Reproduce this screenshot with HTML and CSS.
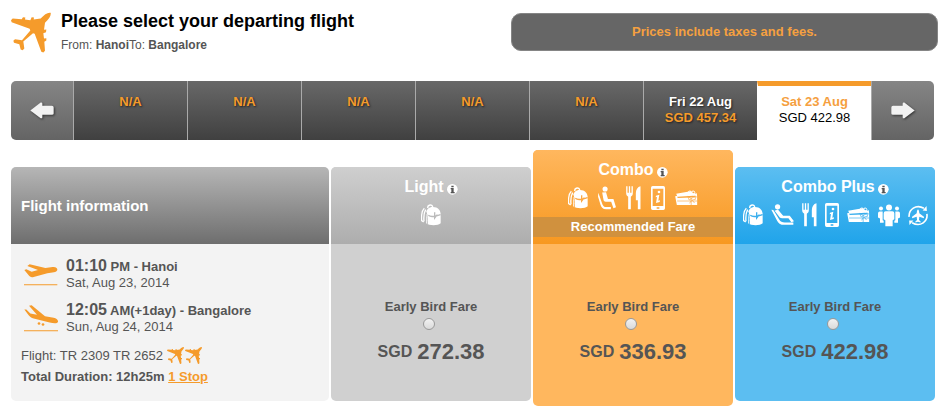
FILE: index.html
```html
<!DOCTYPE html>
<html lang="en">
<head>
    <meta charset="UTF-8">
    <meta name="viewport" content="width=device-width, initial-scale=1.0">
    <title>Select your departing flight</title>
    <link rel="stylesheet" href="styles.css">
</head>
<body>
    <!-- shared icons -->
    <svg class="sprite" aria-hidden="true">
        <symbol id="plane" viewBox="0 0 120 120">
            <path d="M119 1C110-1 100 6 89 18L68 21 69 15 62 14 58 23 42 21 43 15 36 14 32 20 5 18 0 23 2 29 56 49 58 54 33 83 12 80 7 85 9 91 25 95 29 111 35 113 40 108 37 87 66 62 71 64 91 118 97 120 102 115 100 88 106 84 106 77 99 78 97 62 105 59 106 51 99 52 102 31C114 20 121 10 119 1Z"/>
        </symbol>
        <symbol id="takeoff" viewBox="0 0 102 66">
            <path d="M1 18L7 16 23 23 42 18 10 6 17 1 64 12 86 9C96 8 101 13 100 18 98 25 84 26 70 28L29 39C21 41 17 38 14 34Z"/>
            <path d="M0 61H100V64H0Z"/>
        </symbol>
        <symbol id="landing" viewBox="0 0 102 80">
            <path d="M1 13L7 13 19 25 39 29 15 2 23 0 63 33 89 38C98 40 103 45 102 50 100 56 89 55 77 52L29 40C22 38 18 34 14 30Z"/>
            <circle cx="45" cy="55" r="4"/><circle cx="57" cy="58" r="4"/>
            <path d="M0 75H102V78H0Z"/>
        </symbol>
        <symbol id="bag" viewBox="0 0 60 66">
            <path d="M20 12C20 1 34 0 35 9M10 13C1 22 1 38 2 50L8 54M14 17C8 28 8 42 9 52" fill="none" stroke="currentColor" stroke-width="4"/>
            <path d="M15 58V30C15 17 23 9 36 9C51 9 59 19 59 32V58C52 66 24 66 15 58Z"/>
            <path d="M22 34C31 41 40 37 59 32M41 25V42L49 32" fill="none" stroke="var(--cut)" stroke-width="4"/>
            <path d="M15 24C20 35 18 46 19 60" fill="none" stroke="var(--cut)" stroke-width="3"/>
        </symbol>
        <symbol id="seat" viewBox="0 0 56 72">
            <circle cx="22" cy="8" r="8"/>
            <path d="M13 19L25 18 31 39H48L56 65 48 68 41 48H24C19 48 18 45 17 41Z"/>
            <path d="M1 20L14 56C17 63 21 64 27 64H40V71H25C15 71 11 66 8 58L0 31Z"/>
        </symbol>
        <symbol id="recline" viewBox="0 0 70 66">
            <circle cx="20" cy="8" r="8"/>
            <path d="M11 20L21 16 37 35H57L70 52 62 55 53 43H34C28 43 25 39 21 33Z"/>
            <path d="M1 17L7 18 25 47C29 54 34 56 42 56H68V63H40C29 63 24 59 19 51Z"/>
        </symbol>
        <symbol id="meal" viewBox="0 0 44 72">
            <path d="M0 1H4V20H8V1H12V20H16V1H20V22C20 28 17 30 14 32V70H6V32C3 30 0 28 0 22Z"/>
            <path d="M43 1V70H35V43H29V22C29 11 34 3 43 1Z"/>
        </symbol>
        <symbol id="phone" viewBox="0 0 42 72">
            <path fill-rule="evenodd" d="M5 0H37Q42 0 42 5V67Q42 72 37 72H5Q0 72 0 67V5Q0 0 5 0ZM5 8V60H37V8ZM17 64V68H25V64Z"/>
            <circle cx="24" cy="18" r="4"/>
            <path d="M15 29L25 26 22 44 27 43 26 48 15 51 18 33 14 34Z"/>
        </symbol>
        <symbol id="voucher" viewBox="0 0 68 48">
            <path d="M3 11L46 4 58 11 65 10 66 20 54 17 7 20Z"/>
            <path d="M0 19L7 17V24L66 22V45H5Z"/>
            <path d="M6 33H66M48 23V46M47 25L38 19 42 30 51 25 59 17 61 28 51 30 58 39M49 31L43 40" fill="none" stroke="var(--cut)" stroke-width="2"/>
            <circle cx="44" cy="8" r="5" fill="none" stroke="currentColor" stroke-width="3"/>
            <circle cx="54" cy="8" r="5" fill="none" stroke="currentColor" stroke-width="3"/>
        </symbol>
        <symbol id="people" viewBox="0 0 66 68">
            <circle cx="33" cy="10" r="9"/><circle cx="9" cy="13" r="6"/><circle cx="57" cy="13" r="6"/>
            <path d="M23 21H43Q49 21 49 28V45L44 48V66H22V48L17 45V28Q17 21 23 21Z"/>
            <path d="M5 22H14V48L17 50V56H6V43L0 40V28Q0 22 5 22ZM61 22H52V48L49 50V56H60V43L66 40V28Q66 22 61 22Z"/>
        </symbol>
        <symbol id="change" viewBox="0 0 60 64">
            <path d="M3 36C1 14 24-4 48 10M57 27C61 49 38 69 12 54" fill="none" stroke="currentColor" stroke-width="5"/>
            <path d="M44 17L57 18 56 3ZM16 47L3 47 4 61Z"/>
            <path d="M30 13Q34 16 34 25L48 36V40L34 36 33 46 38 50V53L30 51 22 53V50L27 46 26 36 12 40V36L26 25Q26 16 30 13Z"/>
        </symbol>
        <symbol id="info" viewBox="0 0 33 33">
            <circle cx="16" cy="16" r="16"/>
            <path d="M13 5H20V10H13ZM11 12H20V24H23V28H11V24H13V16H11Z" fill="#555"/>
        </symbol>
        <symbol id="arrow" viewBox="0 0 72 50">
            <path d="M1 25L32 1Q37 0 37 5V11H66Q71 11 71 16V34Q71 38 66 38H37V45Q37 50 32 48Z"/>
        </symbol>
    </svg>

    <header class="page-header">
        <div class="heading">
            <svg class="heading-icon"><use href="#plane"/></svg>
            <div>
                <h1>Please select your departing flight</h1>
                <p>From: <b>Hanoi</b>To: <b>Bangalore</b></p>
            </div>
        </div>
        <div class="notice">Prices include taxes and fees.</div>
    </header>

    <main>
        <nav class="dates" aria-label="Departure date">
            <button class="date-arrow" aria-label="Previous dates"><svg><use href="#arrow"/></svg></button>
            <button class="date"><span class="price">N/A</span></button>
            <button class="date"><span class="price">N/A</span></button>
            <button class="date"><span class="price">N/A</span></button>
            <button class="date"><span class="price">N/A</span></button>
            <button class="date"><span class="price">N/A</span></button>
            <button class="date"><span class="day">Fri 22 Aug</span><span class="price">SGD 457.34</span></button>
            <button class="date selected"><span class="day">Sat 23 Aug</span><span class="price">SGD 422.98</span></button>
            <button class="date-arrow next" aria-label="Next dates"><svg><use href="#arrow"/></svg></button>
        </nav>

        <div class="fares">
            <section class="card flight">
                <h2 class="card-head">Flight information</h2>
                <div class="flight-body">
                    <div class="leg">
                        <svg class="takeoff"><use href="#takeoff"/></svg>
                        <div>
                            <p class="time"><strong>01:10</strong> PM - Hanoi</p>
                            <p>Sat, Aug 23, 2014</p>
                        </div>
                    </div>
                    <div class="leg">
                        <svg class="landing"><use href="#landing"/></svg>
                        <div>
                            <p class="time"><strong>12:05</strong> AM(+1day) - Bangalore</p>
                            <p>Sun, Aug 24, 2014</p>
                        </div>
                    </div>
                    <p class="numbers">Flight: TR 2309 TR 2652 <svg><use href="#plane"/></svg><svg><use href="#plane"/></svg></p>
                    <p class="duration">Total Duration: 12h25m <a href="#">1 Stop</a></p>
                </div>
            </section>

            <section class="card light">
                <div class="card-head">
                    <h2>Light <svg class="info"><use href="#info"/></svg></h2>
                    <div class="perks">
                        <svg class="bag"><use href="#bag"/></svg>
                    </div>
                </div>
                <div class="card-body">
                    <label for="fare-light">Early Bird Fare</label>
                    <input type="radio" name="fare" id="fare-light">
                    <p class="amount"><span>SGD</span> <strong>272.38</strong></p>
                </div>
            </section>

            <section class="card combo">
                <div class="card-head">
                    <h2>Combo <svg class="info"><use href="#info"/></svg></h2>
                    <div class="perks">
                        <svg class="bag"><use href="#bag"/></svg>
                        <svg class="seat"><use href="#seat"/></svg>
                        <svg class="meal"><use href="#meal"/></svg>
                        <svg class="phone"><use href="#phone"/></svg>
                        <svg class="voucher"><use href="#voucher"/></svg>
                    </div>
                    <p class="recommended">Recommended Fare</p>
                </div>
                <div class="card-body">
                    <label for="fare-combo">Early Bird Fare</label>
                    <input type="radio" name="fare" id="fare-combo">
                    <p class="amount"><span>SGD</span> <strong>336.93</strong></p>
                </div>
            </section>

            <section class="card plus">
                <div class="card-head">
                    <h2>Combo Plus <svg class="info"><use href="#info"/></svg></h2>
                    <div class="perks">
                        <svg class="bag"><use href="#bag"/></svg>
                        <svg class="recline"><use href="#recline"/></svg>
                        <svg class="meal"><use href="#meal"/></svg>
                        <svg class="phone"><use href="#phone"/></svg>
                        <svg class="voucher"><use href="#voucher"/></svg>
                        <svg class="people"><use href="#people"/></svg>
                        <svg class="change"><use href="#change"/></svg>
                    </div>
                </div>
                <div class="card-body">
                    <label for="fare-plus">Early Bird Fare</label>
                    <input type="radio" name="fare" id="fare-plus">
                    <p class="amount"><span>SGD</span> <strong>422.98</strong></p>
                </div>
            </section>
        </div>
    </main>
</body>
</html>
```
FILE: styles.css
```css
* {
    box-sizing: border-box;
}
body {
    margin: 0;
    padding: 10px 4px 10px 11px;
    font-family: "Liberation Sans", Arial, sans-serif;
    font-size: 13px;
    line-height: 16px;
    color: #555;
    background-color: #fff;
}
h1, h2, p {
    margin: 0;
}
svg {
    fill: currentColor;
}
.sprite {
    display: none;
}

/* header */
.page-header {
    display: grid;
    grid-template-columns: 500fr 427fr;
    align-items: start;
}
.heading {
    display: flex;
    gap: 10px;
}
.heading-icon {
    width: 40px;
    height: 41px;
    margin-top: 2px;
    color: #f59b2b;
}
.heading h1 {
    font-size: 18px;
    line-height: 22px;
    color: #000;
}
.heading p {
    margin-top: 5px;
    font-size: 12px;
}
.notice {
    margin-top: 3px;
    padding: 10px;
    border: 1px solid #858585;
    border-radius: 10px;
    background-color: #666;
    color: #f5a040;
    font-weight: bold;
    text-align: center;
}

/* date bar */
.dates {
    display: grid;
    grid-template-columns: 62px repeat(7, 1fr) 63px;
    height: 59px;
    margin: 28px 4px 0 0;
    border-radius: 5px;
    overflow: hidden;
}
.dates button {
    display: flex;
    flex-direction: column;
    align-items: center;
    margin: 0;
    padding: 13px 0 0;
    border: none;
    border-left: 1px solid #aaa;
    font: bold 13px/16px "Liberation Sans", Arial, sans-serif;
    color: #fff;
    background: linear-gradient(#686868, #404040);
    text-shadow: 1px 1px 2px #222;
    cursor: pointer;
}
.dates .price {
    color: #f59b2b;
}
.dates .date.selected {
    padding-top: 8px;
    border-left-color: #fff;
    border-top: 5px solid #f59b2b;
    background: #fff;
    text-shadow: none;
}
.selected .day {
    color: #f5a040;
}
.dates .selected .price {
    color: #000;
    font-weight: normal;
}
.dates .date-arrow {
    justify-content: center;
    padding: 0;
    color: #f2f2f2;
    background: linear-gradient(#858585, #646464);
}
.dates .date-arrow:first-child {
    border-left: none;
}
.date-arrow svg {
    width: 24px;
    height: 17px;
    filter: drop-shadow(1px 1px 1px #333);
}
.date-arrow.next use {
    transform: scaleX(-1);
    transform-origin: center;
}

/* fare cards */
.fares {
    display: grid;
    grid-template-columns: 318fr 200fr 200fr 200fr;
    gap: 2px;
    align-items: start;
    margin: 10px 3px 0 0;
}
.card {
    margin-top: 17px;
    border-radius: 5px;
    overflow: hidden;
}
.card-head {
    min-height: 77px;
    padding-top: 10px;
    color: #fff;
    text-align: center;
}
.card-head h2 {
    display: flex;
    justify-content: center;
    align-items: center;
    gap: 3px;
    font-size: 16px;
    line-height: 20px;
}
.info {
    width: 11px;
    height: 11px;
    margin-top: 4px;
}
.perks {
    display: flex;
    justify-content: center;
    align-items: center;
    gap: 8px;
    height: 24px;
    margin-top: 6px;
}
.bag { width: 20px; height: 22px; }
.seat { width: 18px; height: 24px; }
.recline { width: 23px; height: 22px; }
.meal { width: 15px; height: 24px; }
.phone { width: 14px; height: 24px; }
.voucher { width: 23px; height: 16px; }
.people { width: 22px; height: 23px; }
.change { width: 20px; height: 21px; }

.card-body {
    display: flex;
    flex-direction: column;
    align-items: center;
    padding: 55px 0 37px;
}
.card-body label {
    font-weight: bold;
}
.card-body input {
    appearance: none;
    width: 12px;
    height: 12px;
    margin: 3px 4px 10px 0;
    border: 1px solid #999;
    border-radius: 50%;
    background: linear-gradient(#f2f2f2, #dadada);
}
.card-body input:checked {
    background: radial-gradient(#444 35%, #e8e8e8 45%);
}
.amount {
    display: flex;
    align-items: center;
    gap: 5px;
    font-size: 16px;
    font-weight: bold;
    line-height: 24px;
}
.amount strong {
    font-size: 22px;
}

.light { --cut: #bbb; background-color: #d0d0d0; }
.light .card-head { background: linear-gradient(#cfcfcf, #adadad); }
.combo { --cut: #fba947; background-color: #ffb75e; }
.combo .card-head { background: linear-gradient(#ffb75e, #f79820); }
.plus { --cut: #3cafed; background-color: #5cbef1; }
.plus .card-head { background: linear-gradient(#5cbef1, #20a4ea); }

.combo {
    margin-top: 0;
}
.combo .card-head {
    padding-bottom: 7px;
}
.combo .perks {
    gap: 10px;
}
.combo .card-body {
    padding-bottom: 42px;
}
.recommended {
    margin-top: 7px;
    padding: 2px 0;
    background-color: #d0913e;
    font-weight: bold;
}

/* flight information */
.flight {
    background-color: #f3f3f3;
}
.flight .card-head {
    display: flex;
    align-items: center;
    padding: 0 10px;
    font-size: 15px;
    background: linear-gradient(#b6b6b6, #6e6e6e);
}
.flight-body {
    padding: 15px 10px 16px;
}
.leg {
    display: flex;
    gap: 8px;
    margin: 0 0 12px 3px;
}
.leg svg {
    width: 34px;
    color: #f59b2b;
}
.takeoff {
    height: 22px;
    margin-top: 5px;
}
.landing {
    height: 27px;
    margin-top: 2px;
}
.time {
    font-weight: bold;
}
.time strong {
    font-size: 16px;
    line-height: 12px;
}
.numbers {
    display: flex;
    align-items: center;
    gap: 1px;
}
.numbers svg {
    width: 17px;
    height: 17px;
    color: #f59b2b;
}
.numbers svg:first-of-type {
    margin-left: 3px;
}
.duration {
    margin-top: 5px;
    font-weight: bold;
}
.duration a {
    color: #f59b2b;
}
```
